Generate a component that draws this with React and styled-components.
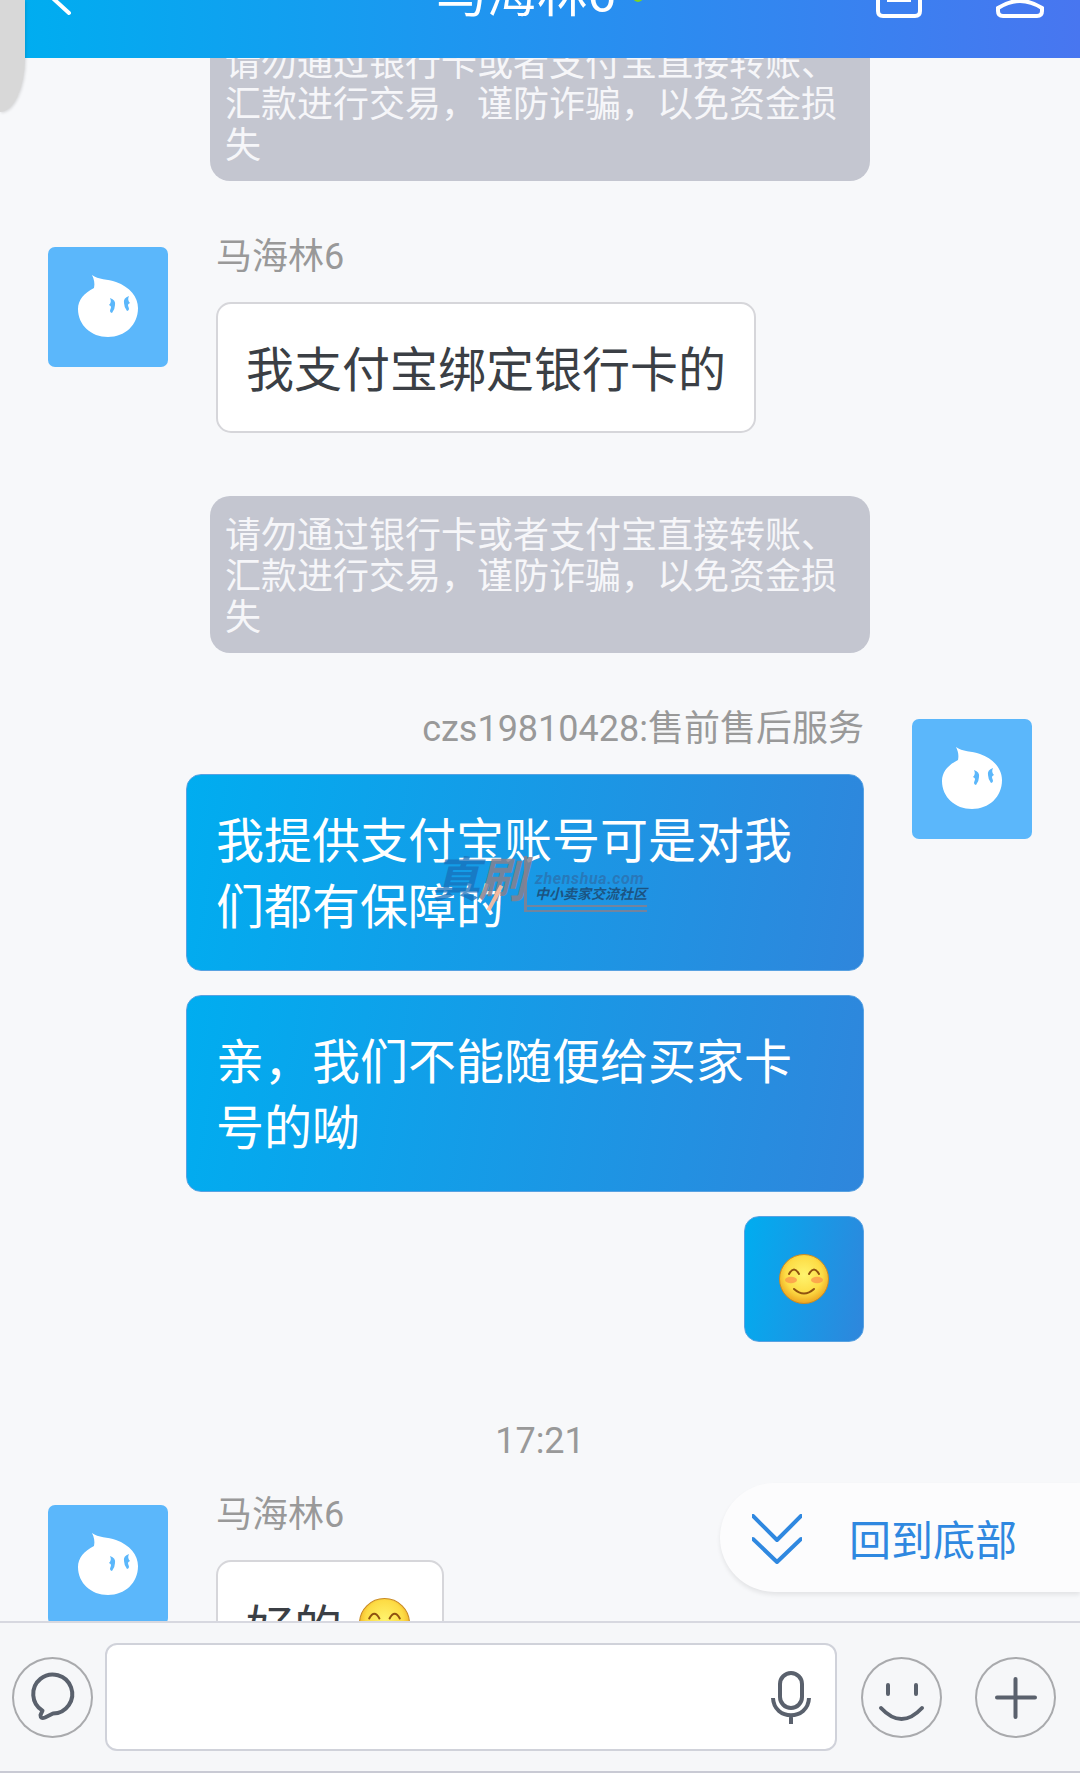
import React from 'react';
import styled, { createGlobalStyle } from 'styled-components';

const GlobalStyle = createGlobalStyle`
  html, body {
    margin: 0;
    padding: 0;
    background: #f7f8fa;
  }
  * {
    box-sizing: border-box;
  }
`;

const NOTICE = '请勿通过银行卡或者支付宝直接转账、汇款进行交易，谨防诈骗，以免资金损失';

function DropAvatar() {
  return (
    <Avatar>
      <svg width="120" height="120" viewBox="0 0 120 120">
        <path
          d="M44 28 C50 33 60 32 68 35 C82 40 90 50 90 61 C90 78 77 90 60 90 C43 90 30 78 30 62 C30 53 36 46 46 41 C47 36 46 32 44 28 Z"
          fill="#fff"
        />
        <path d="M62 51 Q68 53 67 58 Q67 62 64 66 Q61 65 62.5 62 Q64 59 61 58 Q64 55 62 51 Z" fill="#5bb7fb" />
        <path d="M81 49 Q75 51 76 56 Q76 60 79 64 Q82 63 80.5 60 Q79 57 82 56 Q79 53 81 49 Z" fill="#5bb7fb" />
      </svg>
    </Avatar>
  );
}

function Smiley({ size = 51 }) {
  return (
    <svg width={size} height={size} viewBox="0 0 50 50">
      <defs>
        <radialGradient id="smiley-face" cx="50%" cy="42%" r="58%">
          <stop offset="0%" stopColor="#fff46e" />
          <stop offset="65%" stopColor="#fddc45" />
          <stop offset="100%" stopColor="#eda51f" />
        </radialGradient>
      </defs>
      <circle cx="25" cy="25" r="24.5" fill="url(#smiley-face)" stroke="#c98a24" strokeWidth="1" />
      <ellipse cx="12" cy="26" rx="6" ry="3.2" fill="#fb8f4a" opacity="0.7" />
      <ellipse cx="38" cy="26" rx="6" ry="3.2" fill="#fb8f4a" opacity="0.7" />
      <path d="M10 20 Q15 11 20 20 M30 20 Q35 11 40 20" fill="none" stroke="#8f5210" strokeWidth="2" strokeLinecap="round" />
      <path d="M15 35 Q25 44 35 35" fill="none" stroke="#8f5210" strokeWidth="2" strokeLinecap="round" />
    </svg>
  );
}

function App() {
  return (
    <Page>
      <GlobalStyle />
      <SideTab />
      <Header>
        <svg width="30" height="48" viewBox="0 0 30 48">
          <path d="M26 2 L3 24 L26 45" fill="none" stroke="#fff" strokeWidth="4" strokeLinecap="round" strokeLinejoin="round" />
        </svg>
        <TitleGroup>
          <Title>马海林6</Title>
          <OnlineDot />
        </TitleGroup>
        <HeaderIcons>
          <svg width="48" height="60" viewBox="0 0 48 60">
            <path d="M3 4 H45 V52 Q45 57 40 57 H8 Q3 57 3 52 Z" fill="none" stroke="#fff" strokeWidth="4" />
            <path d="M12 41 H36" fill="none" stroke="#fff" strokeWidth="4" />
          </svg>
          <svg width="50" height="60" viewBox="0 0 50 60">
            <path d="M3 52 V49 Q25 35 47 49 V52 Q47 57 42 57 H8 Q3 57 3 52 Z" fill="none" stroke="#fff" strokeWidth="4" />
          </svg>
        </HeaderIcons>
      </Header>

      <Messages>
        <Notice $first>{NOTICE}</Notice>

        <Row>
          <DropAvatar />
          <RowBody>
            <Name>马海林6</Name>
            <WhiteBubble>我支付宝绑定银行卡的</WhiteBubble>
          </RowBody>
        </Row>

        <Notice>{NOTICE}</Notice>

        <Row $mine>
          <DropAvatar />
          <RowBody $mine>
            <Name>czs19810428:售前售后服务</Name>
            <BlueBubble>
              我提供支付宝账号可是对我们都有保障的
              <Watermark>
                <MarkGlint />
                <MarkHead>
                  <MarkZhen>真</MarkZhen>
                  <MarkShua>刷</MarkShua>
                </MarkHead>
                <MarkSide>
                  <MarkDomain>zhenshua.com</MarkDomain>
                  <MarkSlogan>中小卖家交流社区</MarkSlogan>
                  <MarkBars />
                </MarkSide>
              </Watermark>
            </BlueBubble>
            <BlueBubble>亲，我们不能随便给买家卡号的呦</BlueBubble>
            <EmojiBubble>
              <Smiley size={50} />
            </EmojiBubble>
          </RowBody>
        </Row>

        <TimeLabel>17:21</TimeLabel>

        <Row $top={32}>
          <DropAvatar />
          <RowBody>
            <Name>马海林6</Name>
            <WhiteBubble $short>
              好的
              <Smiley />
            </WhiteBubble>
          </RowBody>
        </Row>
      </Messages>

      <BackToBottom>
        <svg width="50" height="50" viewBox="0 0 50 50">
          <path d="M1 2 L25 26 L49 2 M1 25 L25 48 L49 25" fill="none" stroke="#2f88e0" strokeWidth="4" strokeLinecap="round" strokeLinejoin="round" />
        </svg>
        <BackLabel>回到底部</BackLabel>
      </BackToBottom>

      <Composer>
        <RoundButton>
          <svg width="81" height="81" viewBox="0 0 81 81">
            <path
              d="M30.5 53.6 A19.5 19.5 0 1 1 41 56.5 L33 60.5 Q28.5 62.5 28.5 58 Z"
              fill="none"
              stroke="#5a616d"
              strokeWidth="4"
              strokeLinejoin="round"
            />
          </svg>
        </RoundButton>
        <InputBox>
          <svg width="40" height="53" viewBox="0 0 40 53">
            <rect x="9" y="2" width="22" height="35" rx="11" fill="none" stroke="#5a616d" strokeWidth="4" />
            <path d="M2 27 C3 50 37 50 38 27 M20 45 V53" fill="none" stroke="#5a616d" strokeWidth="4" />
          </svg>
        </InputBox>
        <RoundButton $gap={24}>
          <svg width="81" height="81" viewBox="0 0 81 81">
            <path
              d="M27 28 V37 M55 28 V37 M20 51 Q40.5 73 61 51"
              fill="none"
              stroke="#5a616d"
              strokeWidth="4"
              strokeLinecap="round"
            />
          </svg>
        </RoundButton>
        <RoundButton $gap={33}>
          <svg width="81" height="81" viewBox="0 0 81 81">
            <path d="M22 40.5 H60 M40.5 22 V60" fill="none" stroke="#5a616d" strokeWidth="4" strokeLinecap="round" />
          </svg>
        </RoundButton>
      </Composer>
    </Page>
  );
}

export default App;

// style
const Page = styled.div`
  position: relative;
  display: flex;
  flex-direction: column;
  width: 1080px;
  height: 1773px;
  overflow: hidden;
  background: #f7f8fa;
  font-family: Roboto, 'Noto Sans CJK SC', sans-serif;
`;

const SideTab = styled.div`
  position: absolute;
  top: 0;
  left: 0;
  z-index: 3;
  width: 25px;
  height: 112px;
  background: #d8d8d8;
  border-bottom-right-radius: 25px 54px;
  box-shadow: 1px 1px 3px rgba(0, 0, 0, 0.12);
`;

const Header = styled.header`
  position: relative;
  z-index: 2;
  flex: none;
  display: flex;
  align-items: center;
  height: 132px;
  margin: -74px 0 0 25px;
  padding: 0 35px 0 18px;
  color: #fff;
  background: linear-gradient(90deg, #00adf0 0%, #4876f0 100%);
`;

const TitleGroup = styled.div`
  display: flex;
  align-items: center;
  margin-left: 363px;
`;

const Title = styled.div`
  padding-top: 6px;
  font-size: 50.5px;
  line-height: 50px;
`;

const OnlineDot = styled.span`
  width: 10px;
  height: 10px;
  margin: 10px 0 0 17px;
  border-radius: 50%;
  background: #7ed321;
`;

const HeaderIcons = styled.div`
  display: flex;
  gap: 72px;
  margin-left: auto;
  padding-bottom: 6px;
`;

const Messages = styled.main`
  flex: 1;
  min-height: 0;
  overflow: hidden;
`;

const Notice = styled.div`
  width: 660px;
  margin: ${(p) => (p.$first ? '-34px' : '63px')} auto 0;
  padding: 20px 15px 14px;
  font-size: 36px;
  line-height: 41px;
  color: #f6f6f9;
  background: #c4c6d0;
  border-radius: 20px;
`;

const Row = styled.section`
  display: flex;
  flex-direction: ${(p) => (p.$mine ? 'row-reverse' : 'row')};
  gap: 48px;
  margin-top: ${(p) => p.$top ?? 54}px;
  padding: 0 48px;
`;

const Avatar = styled.div`
  flex: none;
  width: 120px;
  height: 120px;
  margin-top: 12px;
  border-radius: 7px;
  background: #5bb7fb;
  overflow: hidden;

  svg {
    display: block;
  }
`;

const RowBody = styled.div`
  flex: 1;
  display: flex;
  flex-direction: column;
  align-items: ${(p) => (p.$mine ? 'flex-end' : 'flex-start')};
`;

const Name = styled.div`
  margin: 2px 0 25px;
  font-size: 36px;
  line-height: 40px;
  color: #999;
`;

const WhiteBubble = styled.div`
  display: flex;
  align-items: center;
  gap: ${(p) => (p.$short ? '17px' : '15px')};
  height: 131px;
  padding: ${(p) => (p.$short ? '0 32px 4px 28px' : '0 28px 4px 28px')};
  font-size: 48px;
  color: #3b3f45;
  background: #fff;
  border: 2px solid #d6d6da;
  border-radius: 15px;
`;

const BlueBubble = styled.div`
  position: relative;
  width: fit-content;
  max-width: 678px;
  margin-bottom: 24px;
  padding: 34px 30px 29px 29px;
  font-size: 48px;
  line-height: 66px;
  color: #fff;
  background: linear-gradient(100deg, #00adf0 0%, #2f86dc 100%);
  border: 1px solid #58a2e2;
  border-radius: 15px;
`;

const EmojiBubble = styled(BlueBubble)`
  display: flex;
  align-items: center;
  justify-content: center;
  width: 120px;
  height: 126px;
  margin-bottom: 0;
  padding: 0;
`;

const Watermark = styled.div`
  position: absolute;
  top: 81px;
  left: 245px;
  display: flex;
  align-items: flex-start;
  width: 215px;
  height: 60px;
  pointer-events: none;
`;

const MarkGlint = styled.span`
  position: absolute;
  top: 28px;
  left: 61px;
  width: 4px;
  height: 28px;
  background: rgba(255, 190, 160, 0.9);
  transform: rotate(28deg);
`;

const MarkHead = styled.div`
  flex: none;
  display: flex;
  width: 92px;
  font-size: 48px;
  line-height: 50px;
  font-weight: 700;
  font-style: italic;
  letter-spacing: -2px;
`;

const MarkZhen = styled.span`
  color: rgba(24, 112, 186, 0.75);
`;

const MarkShua = styled.span`
  color: rgba(136, 128, 140, 0.85);
`;

const MarkSide = styled.div`
  display: flex;
  flex-direction: column;
  height: 56px;
  padding: 15px 0 0 8px;
  border-left: 3px solid rgba(136, 128, 140, 0.85);
`;

const MarkDomain = styled.div`
  font-size: 16px;
  line-height: 15px;
  font-weight: 700;
  font-style: italic;
  letter-spacing: 0.6px;
  white-space: nowrap;
  color: rgba(50, 96, 150, 0.55);
`;

const MarkSlogan = styled.div`
  font-size: 14px;
  line-height: 16px;
  font-weight: 700;
  font-style: italic;
  white-space: nowrap;
  color: rgba(28, 72, 112, 0.85);
`;

const MarkBars = styled.div`
  height: 7px;
  margin: 3px 0 0 -8px;
  border-top: 2px solid rgba(136, 128, 140, 0.8);
  border-bottom: 2px solid rgba(136, 128, 140, 0.8);
`;

const TimeLabel = styled.div`
  margin-top: 79px;
  font-size: 36px;
  line-height: 40px;
  text-align: center;
  color: #999;
`;

const BackToBottom = styled.div`
  position: absolute;
  right: 0;
  bottom: 181px;
  z-index: 1;
  display: flex;
  align-items: center;
  gap: 47px;
  width: 360px;
  height: 109px;
  padding-left: 32px;
  background: #fcfcfd;
  border-radius: 55px 0 0 55px;
  box-shadow: 0 3px 4px rgba(0, 0, 0, 0.08);

  svg {
    margin-top: 3px;
  }
`;

const BackLabel = styled.div`
  padding-top: 8px;
  font-size: 42px;
  line-height: 50px;
  color: #2f88e0;
`;

const Composer = styled.footer`
  position: relative;
  z-index: 2;
  flex: none;
  display: flex;
  align-items: center;
  height: 152px;
  padding-left: 12px;
  background: #f6f7f9;
  border-top: 2px solid #d7d8e0;
  border-bottom: 2px solid #c9cad4;
`;

const RoundButton = styled.div`
  flex: none;
  width: 81px;
  height: 81px;
  margin-left: ${(p) => p.$gap ?? 0}px;
  border-radius: 50%;
  box-shadow: inset 0 0 0 2px #a9aaad;

  svg {
    display: block;
  }
`;

const InputBox = styled.div`
  flex: none;
  display: flex;
  align-items: center;
  justify-content: flex-end;
  width: 732px;
  height: 108px;
  margin-left: 12px;
  padding-right: 24px;
  background: #fff;
  border: 2px solid #d0d2da;
  border-radius: 12px;
`;
